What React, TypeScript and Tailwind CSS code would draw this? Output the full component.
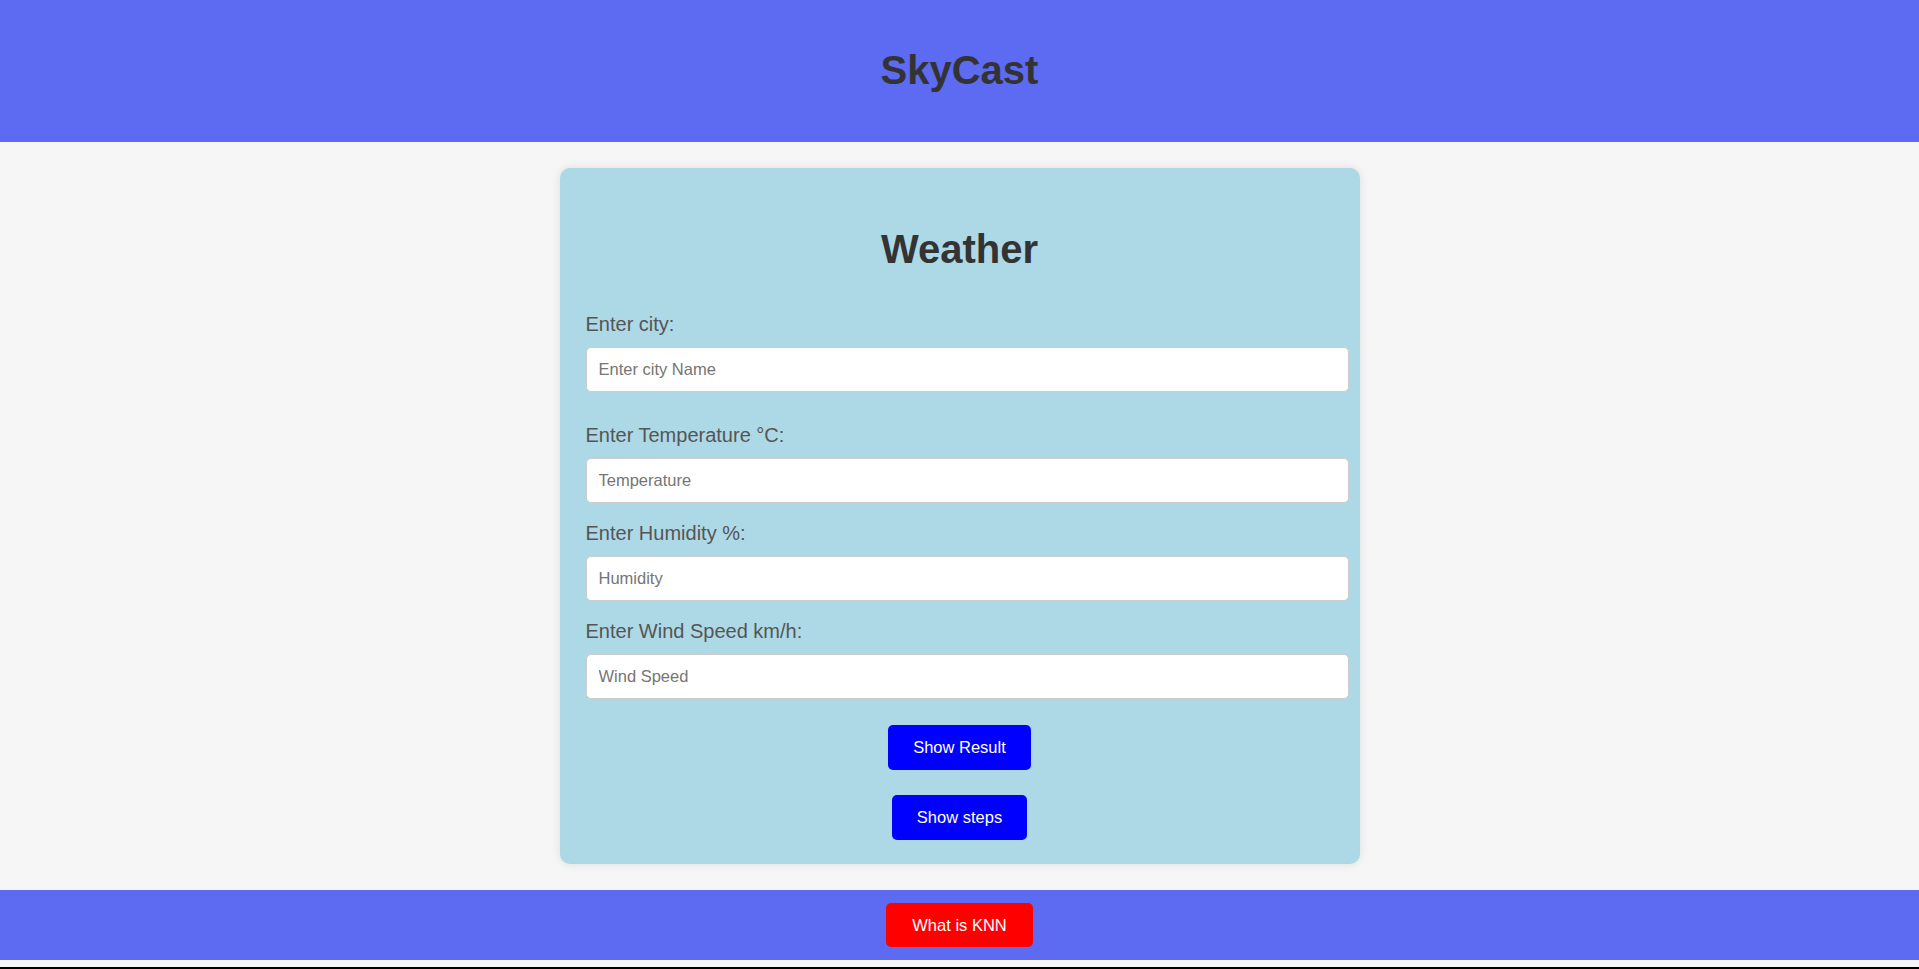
import React from 'react'

const fields = [
  { label: 'Enter city:', placeholder: 'Enter city Name', gap: 'mb-[32px]' },
  { label: 'Enter Temperature °C:', placeholder: 'Temperature', gap: 'mb-[19px]' },
  { label: 'Enter Humidity %:', placeholder: 'Humidity', gap: 'mb-[19px]' },
  { label: 'Enter Wind Speed km/h:', placeholder: 'Wind Speed', gap: '' },
]

export default function App() {
  return (
    <div className="min-h-[969px] bg-[#f6f6f6] font-['Liberation_Sans',Arial,sans-serif]">
      <header className="bg-[#5d6af2] pt-[47px] pb-[49px] text-center">
        <h1 className="text-[40px] leading-[46px] font-bold text-[#333]">SkyCast</h1>
      </header>

      <main className="pt-[26px] pb-[26px]">
        <div className="mx-auto w-[800px] rounded-[10px] bg-[#add8e6] px-[26px] pt-[58px] pb-[24px] shadow-[0_0_10px_rgba(0,0,0,0.1)]">
          <h2 className="text-center text-[40px] leading-[46px] font-bold text-[#333]">Weather</h2>

          <form className="mt-[41px]" onSubmit={(e) => e.preventDefault()}>
            {fields.map((f) => (
              <div key={f.label}>
                <label className="mb-[11px] block text-[20px] leading-[23px] text-[#555]">{f.label}</label>
                <input
                  type="text"
                  placeholder={f.placeholder}
                  className={`block h-[45px] w-[763px] rounded-[5px] border border-[#ccc] bg-white px-[12px] text-[16.5px] text-[#333] outline-none placeholder:text-[#757575] ${f.gap}`}
                />
              </div>
            ))}

            <div className="mt-[26px] flex flex-col items-center gap-[25px]">
              <button
                type="button"
                className="h-[45px] rounded-[5px] bg-[#0000ff] px-[25px] text-[16.5px] leading-[19px] text-white"
              >
                Show Result
              </button>
              <button
                type="button"
                className="h-[45px] rounded-[5px] bg-[#0000ff] px-[25px] text-[16.5px] leading-[19px] text-white"
              >
                Show steps
              </button>
            </div>
          </form>
        </div>
      </main>

      <footer className="flex h-[70px] items-center justify-center bg-[#5d6af2]">
        <button
          type="button"
          className="h-[44px] rounded-[5px] bg-[#ff0000] px-[26px] text-[16.5px] leading-[19px] text-white"
        >
          What is KNN
        </button>
      </footer>
      <div className="mt-[7px] h-[2px] bg-black" />
    </div>
  )
}
